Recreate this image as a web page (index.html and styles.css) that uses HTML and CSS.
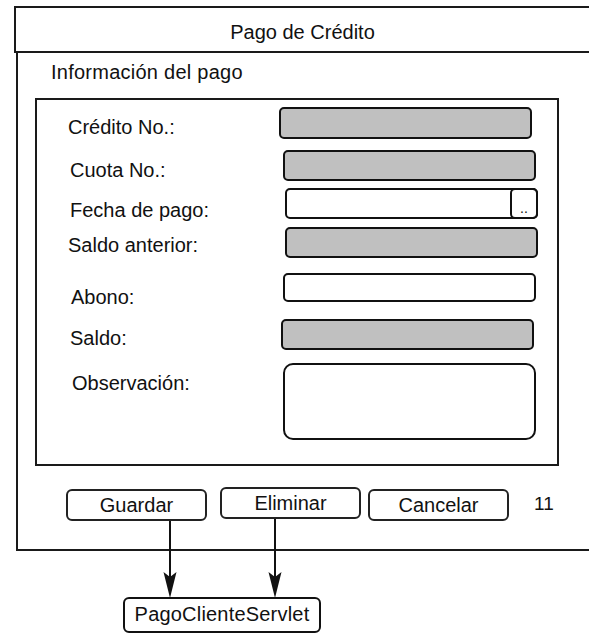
FILE: index.html
```html
<!DOCTYPE html>
<html lang="es">
<head>
  <meta charset="UTF-8" />
  <meta name="viewport" content="width=device-width, initial-scale=1.0"/>
  <title>Pago de Crédito</title>
  <link rel="stylesheet" href="styles.css">
</head>
<body>

  <div class="page">
    <div class="window">
      <div class="title">Pago de Crédito</div>

      <div class="frame">
        <div class="section-title">Información del pago</div>

        <div class="group">
          <div class="row">
            <label class="lbl">Crédito No.:</label>
            <div class="field readonly h-32"></div>
          </div>
          <div class="row gap-11">
            <label class="lbl nudge-2">Cuota No.:</label>
            <div class="field readonly off-4"></div>
          </div>
          <div class="row gap-7">
            <label class="lbl nudge-2 low-2">Fecha de pago:</label>
            <div class="field date off-6">
              <span class="picker">..</span>
            </div>
          </div>
          <div class="row gap-8">
            <label class="lbl high-2">Saldo anterior:</label>
            <div class="field readonly off-6"></div>
          </div>
          <div class="row gap-15">
            <label class="lbl nudge-3 low-4">Abono:</label>
            <div class="field off-4 h-29"></div>
          </div>
          <div class="row gap-17">
            <label class="lbl nudge-2 high-1">Saldo:</label>
            <div class="field readonly off-2"></div>
          </div>
          <div class="row gap-13">
            <label class="lbl nudge-4">Observación:</label>
            <div class="field notes off-4"></div>
          </div>
        </div>

        <div class="actions">
          <button class="btn drop-2">Guardar</button>
          <button class="btn btn-delete">Eliminar</button>
          <button class="btn btn-cancel drop-2">Cancelar</button>
          <span class="page-no">11</span>
        </div>
      </div>
    </div>

    <div class="servlet">PagoClienteServlet</div>

    <!-- connectors from the buttons to the servlet -->
    <svg class="arrows" width="589" height="635" viewBox="0 0 589 635">
      <line x1="170" y1="521" x2="170" y2="590" stroke="#111" stroke-width="2"/>
      <polygon points="163.5,572 170,577 176.5,572 170,598" fill="#111"/>
      <line x1="275" y1="519" x2="275" y2="590" stroke="#111" stroke-width="2"/>
      <polygon points="268.5,572 275,577 281.5,572 275,598" fill="#111"/>
    </svg>
  </div>

</body>
</html>
```

FILE: styles.css
```css
* {
  box-sizing: border-box;
}
body {
  margin: 0;
  font-family: "Liberation Sans", Arial, sans-serif;
  color: #111;
  background: #fff;
  overflow: hidden;
}
.page {
  position: relative;
  width: 589px;
  height: 635px;
  overflow: hidden;
  padding-top: 6px;
}
.window {
  margin-left: 14px;
  width: 577px;
}
.title {
  height: 47px;
  border: 2px solid #1a1a1a;
  padding-top: 13px;
  text-align: center;
  font-size: 20px;
  line-height: 22px;
}
.frame {
  margin-left: 2px;
  height: 498px;
  border-left: 2px solid #1a1a1a;
  border-bottom: 2px solid #1a1a1a;
}
.section-title {
  padding: 7px 0 0 33px;
  font-size: 20px;
  line-height: 24px;
  letter-spacing: 0.25px;
}
.group {
  margin: 14px 0 0 17px;
  width: 524px;
  height: 368px;
  border: 2px solid #1a1a1a;
  padding: 7px 0 0 31px;
}
.row {
  display: flex;
  align-items: flex-start;
}
.lbl {
  width: 211px;
  height: 22px;
  margin-top: 9px;
  margin-bottom: -40px;
  font-size: 20px;
  line-height: 22px;
}
.field {
  position: relative;
  flex: none;
  width: 253px;
  height: 31px;
  border: 2px solid #111;
  border-radius: 5px;
  background: #fff;
}
.field.readonly {
  background: #c0c0c0;
}
.field.notes {
  height: 77px;
  border-radius: 10px;
}
.picker {
  position: absolute;
  top: -2px;
  right: -2px;
  width: 28px;
  height: 31px;
  border: 2px solid #111;
  border-radius: 5px;
  color: #111;
  text-align: center;
  font-size: 14px;
  line-height: 36px;
}
.h-32 { height: 32px; }
.h-29 { height: 29px; }
.gap-7 { margin-top: 7px; }
.gap-8 { margin-top: 8px; }
.gap-11 { margin-top: 11px; }
.gap-13 { margin-top: 13px; }
.gap-15 { margin-top: 15px; }
.gap-17 { margin-top: 17px; }
.nudge-2 { padding-left: 2px; }
.nudge-3 { padding-left: 3px; }
.nudge-4 { padding-left: 4px; }
.low-2 { margin-top: 11px; }
.low-4 { margin-top: 13px; }
.high-1 { margin-top: 8px; }
.high-2 { margin-top: 7px; }
.off-2 { margin-left: 2px; }
.off-4 { margin-left: 4px; }
.off-6 { margin-left: 6px; }

.actions {
  display: flex;
  align-items: flex-start;
  margin: 21px 0 0 48px;
}
.btn {
  width: 141px;
  height: 32px;
  padding: 0;
  border: 2px solid #222;
  border-radius: 6px;
  background: #fff;
  color: #111;
  font-family: inherit;
  font-size: 20px;
}
.drop-2 { margin-top: 2px; }
.btn-delete { margin-left: 13px; }
.btn-cancel { margin-left: 7px; }
.page-no {
  margin: 6px 0 0 25px;
  font-size: 19px;
  line-height: 22px;
}
.servlet {
  margin: 46px 0 0 123px;
  width: 198px;
  height: 36px;
  border: 2px solid #111;
  border-radius: 6px;
  text-align: center;
  font-size: 20px;
  line-height: 31px;
  letter-spacing: 0.2px;
}
.arrows {
  position: absolute;
  top: 0;
  left: 0;
  pointer-events: none;
}
```
